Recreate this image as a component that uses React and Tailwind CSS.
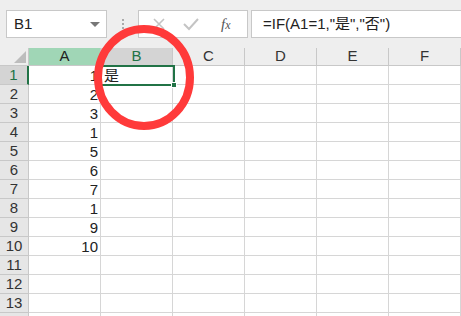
import React from 'react';

const cols = ['A', 'B', 'C', 'D', 'E', 'F'];
const colA = [1, 2, 3, 1, 5, 6, 7, 1, 9, 10];
const rows = Array.from({ length: 14 }, (_, i) => i + 1);

const font = { fontFamily: '"Liberation Sans", "Noto Sans CJK SC", sans-serif' };

const App = () => {
  return (
    <div className="relative w-[461px] h-[316px] overflow-hidden bg-white text-[#222]" style={font}>
      {/* toolbar */}
      <div className="h-[48px] bg-[#eeeeee] flex items-start pt-[10px] pl-[6px]">
        <div className="w-[101px] h-[28px] bg-white border border-[#c8c8c8] flex items-center justify-between pl-[7px] pr-[6px]">
          <span className="text-[15px]">B1</span>
          <span className="w-0 h-0 border-l-[5px] border-r-[5px] border-t-[5px] border-l-transparent border-r-transparent border-t-[#777]" />
        </div>
        <div className="w-[31px] h-[28px] flex flex-col items-center justify-center gap-[2px]">
          <span className="w-[2px] h-[2px] bg-[#aaa]" />
          <span className="w-[2px] h-[2px] bg-[#aaa]" />
          <span className="w-[2px] h-[2px] bg-[#aaa]" />
        </div>
        <div className="w-[110px] h-[28px] bg-white border border-[#c8c8c8] flex items-center pl-[13px] gap-[16px]">
          <svg width="14" height="14" viewBox="0 0 14 14">
            <path d="M2 2 L12 12 M12 2 L2 12" stroke="#c4c4c4" strokeWidth="1.6" fill="none" />
          </svg>
          <svg width="18" height="14" viewBox="0 0 18 14">
            <path d="M2 7 L7 12 L16 2" stroke="#c4c4c4" strokeWidth="2" fill="none" />
          </svg>
          <span className="text-[15px] italic text-[#555] pl-[5px]" style={{ fontFamily: '"Liberation Serif", serif' }}>
            f<span className="text-[12px]">x</span>
          </span>
        </div>
        <div className="ml-[3px] flex-1 h-[28px] bg-white border border-r-0 border-[#c8c8c8] flex items-center pl-[11px]">
          <span className="text-[15px]">=IF(A1=1,"是","否")</span>
        </div>
      </div>

      {/* grid */}
      <div className="grid grid-cols-[29px_repeat(6,72px)]">
        <div className="h-[18px] bg-[#eeeeee] border-r border-b border-[#c8c8c8] relative">
          <svg className="absolute right-[2px] bottom-[2px]" width="12" height="12" viewBox="0 0 12 12">
            <path d="M12 0 L12 12 L0 12 Z" fill="#bdbdbd" />
          </svg>
        </div>
        {cols.map((c) => (
          <div
            key={c}
            className={`h-[18px] border-r border-b border-[#c8c8c8] flex items-center justify-center text-[15px] ${
              c === 'A' ? 'bg-[#a0d6b6] text-[#222]' : c === 'B' ? 'bg-[#d4d4d4] text-[#217346]' : 'bg-[#eeeeee] text-[#333]'
            }`}
          >
            {c}
          </div>
        ))}
        {rows.map((r) => (
          <React.Fragment key={r}>
            <div
              className={`h-[19px] border-b border-[#c8c8c8] flex items-center justify-center text-[15px] ${
                r === 1 ? 'bg-[#d4d4d4] text-[#217346] border-r-2 border-r-[#217346]' : 'bg-[#e6e6e6] text-[#333] border-r border-r-[#c8c8c8]'
              }`}
            >
              {r < 14 ? r : ''}
            </div>
            {cols.map((c) => (
              <div key={c} className="h-[19px] border-r border-b border-[#d6d6d6] flex items-center text-[15px] leading-none">
                {c === 'A' && colA[r - 1] != null && <span className="ml-auto pr-[2px]">{colA[r - 1]}</span>}
                {c === 'B' && r === 1 && <span className="pl-[3px]">是</span>}
              </div>
            ))}
          </React.Fragment>
        ))}
      </div>

      {/* selected cell B1 */}
      <div className="absolute left-[100px] top-[65px] w-[75px] h-[21px] border-2 border-[#217346] pointer-events-none" />
      <div className="absolute left-[171px] top-[82px] w-[6px] h-[6px] bg-[#217346] border border-white" />

      {/* red circle annotation */}
      <svg className="absolute left-0 top-0 pointer-events-none" width="461" height="316">
        <ellipse cx="144" cy="77.5" rx="46" ry="48.5" fill="none" stroke="#ff3a3a" strokeWidth="8" />
      </svg>
    </div>
  );
};

export default App;
